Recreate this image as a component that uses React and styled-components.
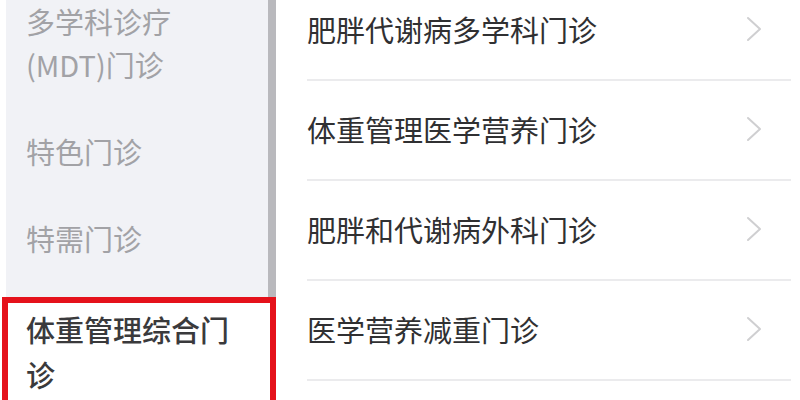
import styled, {createGlobalStyle} from "styled-components";

const GlobalStyle = createGlobalStyle`
  html, body {
    margin: 0;
    padding: 0;
    background: #ffffff;
  }
  body {
    font-family: "Noto Sans CJK SC", "Noto Sans", sans-serif;
  }
`;

const PageStyled = styled.div`
  display: flex;
  width: 800px;
  height: 400px;
  overflow: hidden;
  background: #ffffff;
`;

const SidebarStyled = styled.div`
  width: 262px;
  margin-left: 6px;
  flex-shrink: 0;
  background: #f1f2f6;
  border-right: 8px solid #b9b9bd;
  display: flex;
  flex-direction: column;
`;

const SidebarListStyled = styled.div`
  margin-top: -22px;
  display: flex;
  flex-direction: column;
`;

const SidebarItemStyled = styled.div`
  padding: ${({active}) => (active ? "4px 10px 10px 18px" : "22px 16px 22px 20px")};
  margin: ${({active}) => (active ? "15px -8px 0 -4px" : "0")};
  border: ${({active}) => (active ? "6px solid #e5121b" : "none")};
  border-bottom: none;
  background: ${({active}) => (active ? "#ffffff" : "transparent")};
  font-size: 29px;
  line-height: ${({active}) => (active ? "45px" : "43px")};
  color: ${({active}) => (active ? "#3a3a3c" : "#a2a2a6")};
  font-weight: ${({active}) => (active ? 500 : 400)};
`;

const ContentStyled = styled.div`
  flex: 1;
  display: flex;
  flex-direction: column;
  padding: 0 9px 0 31px;
`;

const RowListStyled = styled.div`
  margin-top: -19px;
  display: flex;
  flex-direction: column;
`;

const RowStyled = styled.div`
  box-sizing: border-box;
  height: 100px;
  border-bottom: 2px solid #ebebed;
  display: flex;
  align-items: center;
  justify-content: space-between;
  padding-right: 29px;
  padding-bottom: 2px;
`;

const RowTitleStyled = styled.div`
  font-size: 29px;
  line-height: 40px;
  color: #303032;
  font-weight: 400;
`;

const Chevron = () => (
  <svg width="16" height="26" viewBox="0 0 16 26" fill="none">
    <polyline
      points="2,2 14,13 2,24"
      stroke="#cfcfd1"
      strokeWidth="2"
      strokeLinecap="round"
      strokeLinejoin="round"
    />
  </svg>
);

const sideItems = [
  {label: "多学科诊疗\n(MDT)门诊"},
  {label: "特色门诊"},
  {label: "特需门诊"},
  {label: "体重管理综合门\n诊", active: true},
];

const rows = [
  "肥胖代谢病多学科门诊",
  "体重管理医学营养门诊",
  "肥胖和代谢病外科门诊",
  "医学营养减重门诊",
];

export default function App() {
  return (
    <>
      <GlobalStyle />
      <PageStyled>
        <SidebarStyled>
          <SidebarListStyled>
            {sideItems.map((item) => (
              <SidebarItemStyled key={item.label} active={item.active}>
                {item.label.split("\n").map((line) => (
                  <div key={line}>{line}</div>
                ))}
              </SidebarItemStyled>
            ))}
          </SidebarListStyled>
        </SidebarStyled>

        <ContentStyled>
          <RowListStyled>
            {rows.map((title) => (
              <RowStyled key={title}>
                <RowTitleStyled>{title}</RowTitleStyled>
                <Chevron />
              </RowStyled>
            ))}
          </RowListStyled>
        </ContentStyled>
      </PageStyled>
    </>
  );
}
